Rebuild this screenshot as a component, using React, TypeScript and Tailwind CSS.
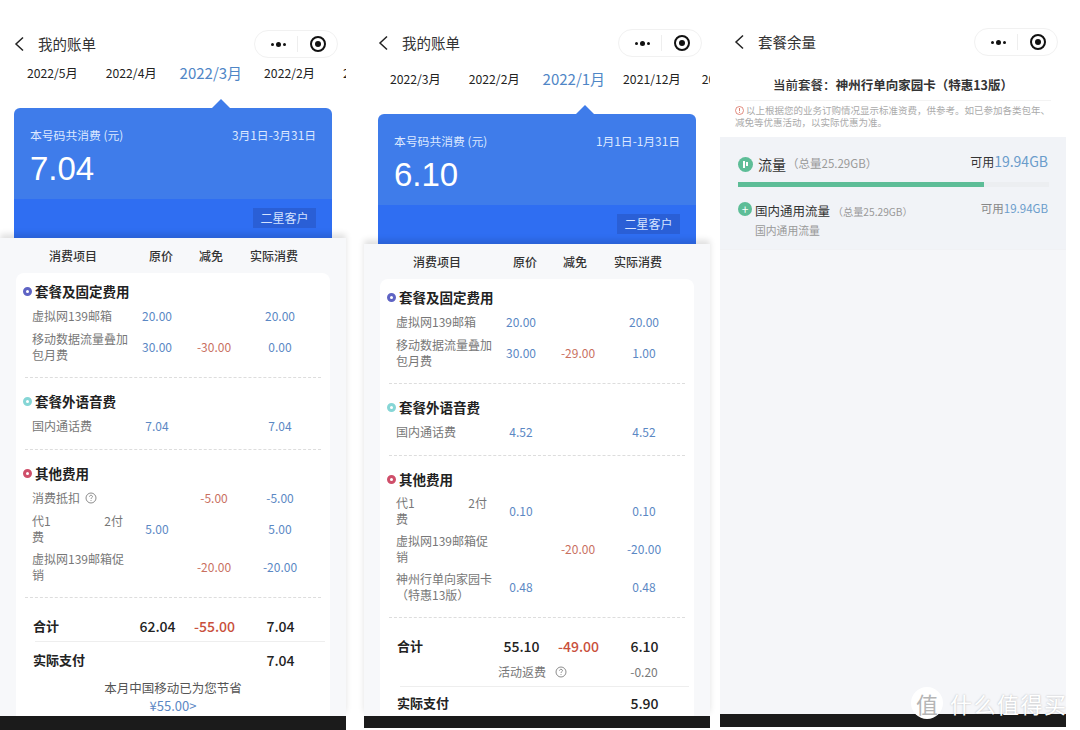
import type { ReactNode } from 'react'

const CJK = { fontFamily: '"Noto Sans CJK SC", "Noto Sans", sans-serif' }

type Row = {
  name: ReactNode
  price?: string
  cut?: string
  actual?: string
  tall?: boolean
}

type Section = {
  title: string
  dot: string
  rows: Row[]
}

function SplitName() {
  return (
    <div>
      <div className="flex w-[91px] justify-between">
        <span>代1</span>
        <span>2付</span>
      </div>
      <div>费</div>
    </div>
  )
}

function Hint() {
  return (
    <svg width="12" height="12" viewBox="0 0 12 12" className="inline-block" fill="none">
      <circle cx="6" cy="6" r="5" stroke="#7f7f7f" strokeWidth="0.9" />
      <path d="M4.5 4.7c0-.9.7-1.4 1.5-1.4s1.5.5 1.5 1.3c0 1.1-1.5 1.1-1.5 2.3" stroke="#7f7f7f" strokeWidth="0.9" />
      <circle cx="6" cy="8.6" r="0.5" fill="#7f7f7f" />
    </svg>
  )
}

function NavBar({ title, top }: { title: string; top: string }) {
  return (
    <div className={`flex items-center justify-between pl-[14px] pr-[8px] h-7 ${top}`}>
      <div className="flex items-center">
        <svg width="11" height="16" viewBox="0 0 11 16" fill="none">
          <path d="M9 1.5 2 8l7 6.5" stroke="#222" strokeWidth="1.5" />
        </svg>
        <span className="-mt-[1px] ml-[13px] text-[14.5px] text-[#333]">{title}</span>
      </div>
      <div className="flex h-7 w-[84px] items-center rounded-full border border-[#f1f1f1] bg-white">
        <div className="flex w-[42px] items-center justify-center gap-[2px] pl-1">
          <span className="h-[3px] w-[3px] rounded-full bg-[#111]" />
          <span className="h-[5px] w-[5px] rounded-full bg-[#111]" />
          <span className="h-[3px] w-[3px] rounded-full bg-[#111]" />
        </div>
        <div className="h-4 w-px bg-[#eeeeee]" />
        <div className="flex flex-1 items-center justify-center">
          <span className="flex h-[16px] w-[16px] items-center justify-center rounded-full border-2 border-[#111]">
            <span className="h-[6px] w-[6px] rounded-full bg-[#111]" />
          </span>
        </div>
      </div>
    </div>
  )
}

function Tabs({ items, active, after, rest, className }: { items: string[]; active: number; after: string; rest: string; className: string }) {
  return (
    <div className={`flex h-6 items-center overflow-hidden whitespace-nowrap pr-[3px] ${className}`}>
      {items.map((t, i) => {
        if (i === active) {
          return (
            <span key={t} className={`${after} shrink-0 text-[15px] text-[#4f86c6]`}>
              {t}
            </span>
          )
        }
        const gap = i === active - 1 ? 'mr-[23px]' : i > active ? rest : 'mr-[28px]'
        return (
          <span key={t} className={`${gap} shrink-0 text-[12.2px] text-[#222]`}>
            {t}
          </span>
        )
      })}
    </div>
  )
}

function BlueCard({ period, amount, className }: { period: string; amount: string; className: string }) {
  return (
    <div className={`relative mx-[14px] w-[318px] rounded-t-md bg-[#3f7cea] ${className}`}>
      <div className="absolute -top-[9px] left-[198px] h-0 w-0 border-x-[9px] border-b-[9px] border-x-transparent border-b-[#3f7cea]" />
      <div className="flex h-[91px] flex-col px-4 pt-[19px] text-white">
        <div className="flex items-center justify-between text-[11.8px] leading-4 text-[#dce8ff]">
          <span>本号码共消费 (元)</span>
          <span>{period}</span>
        </div>
        <div className="mt-[6px] text-[33px] leading-[40px]" style={{ fontFamily: '"Liberation Sans", sans-serif' }}>
          {amount}
        </div>
      </div>
      <div className="flex h-[39px] items-start justify-end bg-[#2f6ef2] pr-4 pt-[9px]">
        <span className="flex h-5 w-[63px] items-center justify-center bg-[#2a5fd6] text-[12px] text-[#d5e3ff]">二星客户</span>
      </div>
    </div>
  )
}

function Bill({ sections }: { sections: Section[] }) {
  return (
    <>
      {sections.map((s, i) => (
        <div key={s.title} className={`mx-[9px] border-b border-dashed border-[#dddddd] pb-[11px] ${i === 0 ? 'pt-[8px]' : 'pt-[13px]'}`}>
          <div className="flex h-5 items-center text-[13.5px] font-bold text-[#222]">
            <span className={`-ml-[2px] mr-[3px] h-[9px] w-[9px] rounded-full border-[3px] ${s.dot}`} />
            {s.title}
          </div>
          <div className="mt-[3px] text-[12px]">
            {s.rows.map((r, j) => (
              <div key={j} className={`-ml-[9px] grid grid-cols-[100px_50px_64px_68px] items-center pl-4 ${r.tall ? 'h-[38px]' : 'h-6'}`}>
                <div className="w-[96px] break-all leading-4 text-[#777777]">{r.name}</div>
                <div className="text-center text-[#5b88c4]">{r.price}</div>
                <div className="text-center text-[#c9705f]">{r.cut}</div>
                <div className="text-center text-[#5b88c4]">{r.actual}</div>
              </div>
            ))}
          </div>
        </div>
      ))}
    </>
  )
}

function TotalRow({ label, price, cut, actual, className }: { label: string; price?: string; cut?: string; actual: string; className: string }) {
  return (
    <div className={`grid grid-cols-[100px_50px_64px_68px] items-center pl-[17px] text-[#222] ${className}`}>
      <div className="text-[13px] font-bold">{label}</div>
      <div className="-ml-[1px] text-center text-[14px] font-medium">{price}</div>
      <div className="-ml-[1px] text-center text-[14px] font-medium text-[#c9503c]">{cut}</div>
      <div className="-ml-[1px] text-center text-[14px] font-medium">{actual}</div>
    </div>
  )
}

function BillSheet({ children }: { children: ReactNode }) {
  return (
    <div className="relative flex-1 overflow-hidden bg-[#f7f8fa] shadow-[0_-4px_6px_rgba(0,0,0,0.12)]">
      <div className="grid h-[35px] grid-cols-[116px_60px_40px_86px] items-center pl-[15px] text-center text-[12px] font-medium text-[#333]">
        <span>消费项目</span>
        <span>原价</span>
        <span>减免</span>
        <span className="whitespace-nowrap">实际消费</span>
      </div>
      <div className="mx-4 h-full rounded-t-lg bg-white">{children}</div>
    </div>
  )
}

const promoRow: Row = { name: '虚拟网139邮箱促销', cut: '-20.00', actual: '-20.00', tall: true }

const sectionsMarch: Section[] = [
  {
    title: '套餐及固定费用',
    dot: 'border-[#5f64c4]',
    rows: [
      { name: '虚拟网139邮箱', price: '20.00', actual: '20.00' },
      { name: '移动数据流量叠加包月费', price: '30.00', cut: '-30.00', actual: '0.00', tall: true },
    ],
  },
  {
    title: '套餐外语音费',
    dot: 'border-[#86d6d6]',
    rows: [{ name: '国内通话费', price: '7.04', actual: '7.04' }],
  },
  {
    title: '其他费用',
    dot: 'border-[#cf4f6a]',
    rows: [
      {
        name: (
          <span className="flex items-center gap-[5px]">
            消费抵扣 <Hint />
          </span>
        ),
        cut: '-5.00',
        actual: '-5.00',
      },
      { name: <SplitName />, price: '5.00', actual: '5.00', tall: true },
      promoRow,
    ],
  },
]

const sectionsJanuary: Section[] = [
  {
    title: '套餐及固定费用',
    dot: 'border-[#5f64c4]',
    rows: [
      { name: '虚拟网139邮箱', price: '20.00', actual: '20.00' },
      { name: '移动数据流量叠加包月费', price: '30.00', cut: '-29.00', actual: '1.00', tall: true },
    ],
  },
  {
    title: '套餐外语音费',
    dot: 'border-[#86d6d6]',
    rows: [{ name: '国内通话费', price: '4.52', actual: '4.52' }],
  },
  {
    title: '其他费用',
    dot: 'border-[#cf4f6a]',
    rows: [
      { name: <SplitName />, price: '0.10', actual: '0.10', tall: true },
      promoRow,
      { name: '神州行单向家园卡（特惠13版）', price: '0.48', actual: '0.48', tall: true },
    ],
  },
]

function MarchBill() {
  return (
    <div className="flex h-[716px] flex-col bg-white">
      <NavBar title="我的账单" top="mt-[30px]" />
      <Tabs items={['2022/5月', '2022/4月', '2022/3月', '2022/2月', '2022/1月']} active={2} after="mr-[22px]" rest="mr-[28px]" className="mt-[3px] pl-[27px]" />
      <BlueCard period="3月1日-3月31日" amount="7.04" className="mt-[23px]" />
      <BillSheet>
        <Bill sections={sectionsMarch} />
        <TotalRow label="合计" price="62.04" cut="-55.00" actual="7.04" className="mt-[16px] h-6" />
        <div className="ml-[19px] mr-[5px] mt-[3px] h-px bg-[#eeeeee]" />
        <TotalRow label="实际支付" actual="7.04" className="mt-[6px] h-6" />
        <div className="mt-[4px] text-center text-[12.5px] leading-[24px] text-[#555555]">
          本月中国移动已为您节省
          <div className="-mt-[6px] text-[13px] text-[#5b88c4]">¥55.00&gt;</div>
        </div>
      </BillSheet>
    </div>
  )
}

function JanuaryBill() {
  return (
    <div className="flex h-[716px] flex-col bg-white">
      <NavBar title="我的账单" top="mt-[29px]" />
      <Tabs items={['2022/3月', '2022/2月', '2022/1月', '2021/12月', '2021/11月']} active={2} after="mr-[18px]" rest="mr-[21px]" className="mt-[10px] pl-[26px]" />
      <BlueCard period="1月1日-1月31日" amount="6.10" className="mt-[23px]" />
      <BillSheet>
        <Bill sections={sectionsJanuary} />
        <TotalRow label="合计" price="55.10" cut="-49.00" actual="6.10" className="mt-[16px] h-6" />
        <div className="mt-1 grid h-5 grid-cols-[100px_50px_64px_68px] items-center pl-4 text-[12px] text-[#777777]">
          <span />
          <span className="col-span-2 flex items-center gap-[9px] pl-[2px] whitespace-nowrap">
            活动返费 <Hint />
          </span>
          <span className="text-center">-0.20</span>
        </div>
        <div className="ml-[20px] mr-[5px] mt-[4px] h-px bg-[#eeeeee]" />
        <TotalRow label="实际支付" actual="5.90" className="mt-[4px] h-6" />
      </BillSheet>
    </div>
  )
}

function Remaining() {
  return (
    <div className="flex h-[714px] flex-col bg-white">
      <NavBar title="套餐余量" top="mt-[28px]" />
      <div className="mt-[19px] text-center text-[12.5px] font-medium leading-5 text-[#333]">
        当前套餐：<span className="font-bold">神州行单向家园卡（特惠13版）</span>
      </div>
      <div className="mx-[15px] mt-[5px] border-t border-[#f3f3f3] pt-[3px] text-[9.5px] leading-3 text-[#aaaaaa]">
        <svg width="9" height="9" viewBox="0 0 9 9" fill="none" className="mr-[2px] inline-block align-[-1px]">
          <circle cx="4.5" cy="4.5" r="4" stroke="#d9705f" strokeWidth="0.8" />
          <path d="M4.5 2v3.2" stroke="#d9705f" strokeWidth="0.9" />
          <circle cx="4.5" cy="6.6" r="0.5" fill="#d9705f" />
        </svg>
        以上根据您的业务订购情况显示标准资费，供参考。如已参加各类包年、减免等优惠活动，以实际优惠为准。
      </div>
      <div className="mt-[9px] flex-1 bg-[#f5f6f9]">
        <div className="h-[113px] border-b border-[#f0f1f4] bg-[#f1f3f7] px-[18px]">
          <div className="flex h-[28px] translate-y-[13px] items-center justify-between">
            <div className="flex items-center">
              <span className="flex h-[15px] w-[15px] items-center justify-center gap-[1px] rounded-full bg-[#5dbd97]">
                <span className="h-[7px] w-[2px] bg-white" />
                <span className="h-[4px] w-[2px] bg-white" />
              </span>
              <span className="ml-[5px] text-[14px] text-[#333]">流量</span>
              <span className="ml-[1px] text-[11.5px] text-[#999999]">（总量25.29GB）</span>
            </div>
            <div className="-mt-[5px] text-[12px] text-[#333]">
              可用<span className="text-[14px] text-[#6a9ccb]">19.94GB</span>
            </div>
          </div>
          <div className="mt-[17px] h-[5px] w-[311px] bg-[#eceef1]">
            <div className="h-full bg-[#5dbd97]" style={{ width: '79%' }} />
          </div>
          <div className="mt-[16px] flex justify-between">
            <div className="flex">
              <span className="mt-[-1px] flex h-[14px] w-[14px] items-center justify-center rounded-full bg-[#5dbd97] text-[12px] leading-none text-white">+</span>
              <div className="ml-[3px]">
                <div className="text-[12.5px] leading-[16px] text-[#333]">
                  国内通用流量 <span className="text-[10.2px] text-[#999999]">（总量25.29GB）</span>
                </div>
                <div className="mt-[2px] text-[10.8px] leading-4 text-[#999999]">国内通用流量</div>
              </div>
            </div>
            <div className="mt-[-3px] text-[11.5px] text-[#888888]">
              可用<span className="text-[#6a9ccb]">19.94GB</span>
            </div>
          </div>
        </div>
      </div>
    </div>
  )
}

function Watermark() {
  return (
    <div className="absolute left-[911px] top-[687px] flex items-center">
      <span className="flex h-[32px] w-[32px] items-center justify-center rounded-full bg-white text-[22px] leading-none text-[#b5b5b5]">值</span>
      <span className="ml-[7px] text-[22px] leading-none tracking-[1.5px] text-white [text-shadow:0_0_2px_rgba(0,0,0,0.28)]">什么值得买</span>
    </div>
  )
}

export default function App() {
  return (
    <div className="relative flex h-[730px] w-[1080px] overflow-hidden bg-white" style={CJK}>
      <div className="w-[346px]">
        <MarchBill />
        <div className="h-[14px] bg-[#1b1b1b]" />
      </div>
      <div className="ml-[18px] w-[346px]">
        <JanuaryBill />
        <div className="h-[12px] bg-[#1b1b1b]" />
      </div>
      <div className="ml-[10px] w-[346px]">
        <Remaining />
        <div className="h-[13px] bg-[#1b1b1b]" />
      </div>
      <Watermark />
    </div>
  )
}
